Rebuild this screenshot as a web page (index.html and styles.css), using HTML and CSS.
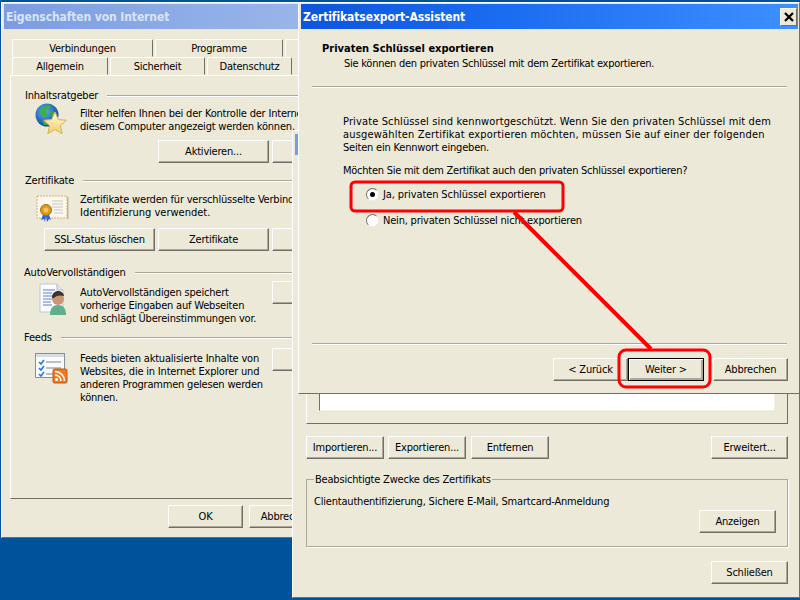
FILE: index.html
```html
<!DOCTYPE html>
<html lang="de">
<head>
<meta charset="utf-8">
<title>Zertifikatsexport-Assistent</title>
<link rel="stylesheet" href="styles.css">
</head>
<body>
<div class="desktop">

  <section class="win props">
    <header class="title title-off">Eigenschaften von Internet</header>
    <div class="tabs tabs-back">
      <span class="tab t-verb">Verbindungen</span><span class="tab t-prog">Programme</span><span class="tab t-rest"></span>
    </div>
    <div class="tabs">
      <span class="tab t-allg">Allgemein</span><span class="tab t-sich">Sicherheit</span><span class="tab t-date">Datenschutz</span>
    </div>
    <div class="panel">
      <div class="legend sec1"><span>Inhaltsratgeber</span><i class="rule"></i></div>
      <div class="row row1">
        <svg class="icon icon-globe" width="34" height="34" viewBox="0 0 34 34">
          <defs>
            <radialGradient id="g1" cx=".4" cy=".35" r=".7"><stop offset="0" stop-color="#5fb2f0"/><stop offset="1" stop-color="#0c3f9c"/></radialGradient>
            <linearGradient id="g2" x1="0" y1="0" x2="0" y2="1"><stop offset="0" stop-color="#fffbe0"/><stop offset="1" stop-color="#f3cd62"/></linearGradient>
          </defs>
          <circle cx="12" cy="12" r="11.5" fill="url(#g1)"/>
          <path d="M4 8c3-4 8-6 12-5-1 3-4 3-5 5 2 2 1 5-1 7-3 0-3-4-6-7z" fill="#3cb04a"/>
          <path d="M15 8c3 0 6 1 7 4l-4 2c-2-1-4-3-3-6zM7 18l4 1 2 3-4 0z" fill="#39a648"/>
          <path d="M20 9l3.400 7.500 8 .8-6 5.400 1.800 8-7.200-4.200-7.200 4.200 1.800-8-6-5.400 8-.8z" fill="url(#g2)" stroke="#d8b25e"/>
        </svg>
        <p class="text">Filter helfen Ihnen bei der Kontrolle der Internetinhalte, die auf<br>diesem Computer angezeigt werden können.</p>
      </div>
      <div class="btns btns1">
        <button class="btn w111">Aktivieren...</button><button class="btn w111 gap3">Filter</button>
      </div>

      <div class="legend sec2"><span>Zertifikate</span><i class="rule"></i></div>
      <div class="row row2">
        <svg class="icon icon-cert" width="34" height="34" viewBox="0 0 34 34">
          <rect x="1" y="1" width="30" height="22" fill="#fdf8ee" stroke="#d9b06c" stroke-dasharray="2 1"/>
          <rect x="31" y="2" width="1.500" height="22" fill="#b8b6a8"/>
          <path d="M16 6h11M16 9h11M16 12h11M18 15h9M18 18h9" stroke="#c4c4c4"/>
          <path d="M8 17l-3 8 3-1 1 3 1-6 1 6 2-3 2 1-3-8z" fill="#2c62d8"/>
          <circle cx="10" cy="15" r="5.500" fill="#d99a1c" stroke="#a86f10"/>
          <circle cx="10" cy="15" r="2.500" fill="#f2c558"/>
        </svg>
        <p class="text">Zertifikate werden für verschlüsselte Verbindungen und zur<br><span class="ls0">Identifizierung verwendet.</span></p>
      </div>
      <div class="btns btns2">
        <button class="btn w111">SSL-Status löschen</button><button class="btn w111 gap3">Zertifikate</button><button class="btn w111 gap3">Herausgeber</button>
      </div>

      <div class="legend sec3"><span>AutoVervollständigen</span><i class="rule"></i></div>
      <div class="row row3">
        <svg class="icon icon-doc" width="34" height="34" viewBox="0 0 34 34">
          <path d="M1 1h17l6 6v22H1z" fill="#fbfcff" stroke="#c2c6cf"/>
          <path d="M18 1v6h6" fill="#dfe3ea" stroke="#b5b9c2"/>
          <path d="M4 7h12M4 10h9M4 13h10M4 16h9M4 19h8M4 22h9" stroke="#5680c8"/>
          <path d="M11 32c0-7 3-10 8-10s8 3 8 10z" fill="#5fae8e"/>
          <circle cx="19" cy="16" r="6" fill="#c99872"/>
          <path d="M13 15c0-5 3-7 6-7s6 2 6 5c-3-1-8-1-10 2z" fill="#3d3430"/>
        </svg>
        <p class="text narrow">AutoVervollständigen speichert<br>vorherige Eingaben auf Webseiten<br>und schlägt Übereinstimmungen vor.</p>
        <button class="btn w111 side3">Einstellungen</button>
      </div>

      <div class="legend sec4"><span>Feeds</span><i class="rule"></i></div>
      <div class="row row4">
        <svg class="icon icon-feed" width="34" height="32" viewBox="0 0 34 32">
          <rect x=".5" y=".5" width="29" height="24" fill="#fafbff" stroke="#8a8f9c"/>
          <rect x="1" y="1" width="28" height="3" fill="#d8dce8"/>
          <path d="M4 9l2 2 3-4M4 15l2 2 3-4M4 21l2 2 3-4" stroke="#2a78d8" stroke-width="1.600" fill="none"/>
          <path d="M11 9h15M11 15h15M11 21h8" stroke="#7d828c"/>
          <rect x="18" y="16" width="14" height="14" rx="1.500" fill="#ee7a1c" stroke="#c25a10"/>
          <circle cx="21.500" cy="26.500" r="1.500" fill="#fff"/>
          <path d="M20 22a6 6 0 0 1 6 6M20 18.500a9.500 9.500 0 0 1 9.500 9.500" stroke="#fff" stroke-width="1.600" fill="none"/>
        </svg>
        <p class="text narrow">Feeds bieten aktualisierte Inhalte von<br>Websites, die in Internet Explorer und<br>anderen Programmen gelesen werden<br>können.</p>
        <button class="btn w111 side4">Einstellungen</button>
      </div>
    </div>
    <div class="foot-props">
      <button class="btn w75">OK</button><button class="btn w75 gap6">Abbrechen</button>
    </div>
  </section>

  <section class="win cert">
    <header class="title title-off title-small"></header>
    <div class="cert-body">
      <div class="cert-group">
        <div class="listbox"></div>
      </div>
      <div class="cert-btns">
        <button class="btn w78">Importieren...</button><button class="btn w78 gap4">Exportieren...</button><button class="btn w78 gap5">Entfernen</button><button class="btn w77 push">Erweitert...</button>
      </div>
      <fieldset class="purpose">
        <legend>Beabsichtigte Zwecke des Zertifikats</legend>
        <p class="purpose-text">Clientauthentifizierung, Sichere E-Mail, Smartcard-Anmeldung</p>
        <div class="purpose-foot"><button class="btn w77">Anzeigen</button></div>
      </fieldset>
      <div class="cert-foot"><button class="btn w77">Schließen</button></div>
    </div>
  </section>

  <section class="win wizard">
    <header class="title title-on">
      <span>Zertifikatsexport-Assistent</span>
      <span class="close"><svg width="10" height="10" viewBox="0 0 10 10"><path d="M1 1l8 8M9 1l-8 8" stroke="#000" stroke-width="2.200"/></svg></span>
    </header>
    <div class="wiz-head">
      <h1>Privaten Schlüssel exportieren</h1>
      <p>Sie können den privaten Schlüssel mit dem Zertifikat exportieren.</p>
    </div>
    <hr class="sep">
    <div class="wiz-body">
      <p><span class="wide-a">Private Schlüssel sind kennwortgeschützt. Wenn Sie den privaten Schlüssel mit dem</span><br><span class="wide-b">ausgewählten Zertifikat exportieren möchten, müssen Sie auf einer der folgenden</span><br>Seiten ein Kennwort eingeben.</p>
      <p class="question">Möchten Sie mit dem Zertifikat auch den privaten Schlüssel exportieren?</p>
      <div class="radio radio-first"><i class="dot on"></i><span>Ja, privaten Schlüssel exportieren</span></div>
      <div class="radio radio-second"><i class="dot"></i><span>Nein, privaten Schlüssel nicht exportieren</span></div>
    </div>
    <hr class="sep">
    <div class="wiz-foot">
      <button class="btn w75">&lt; Zurück</button><button class="btn w76 default">Weiter &gt;</button><button class="btn w75 gap9">Abbrechen</button>
    </div>
  </section>

  <svg class="marks" width="800" height="600" viewBox="0 0 800 600">
    <g fill="none" stroke="#f00" stroke-width="3">
      <rect x="351" y="182" width="212" height="29" rx="4"/>
      <rect x="619" y="350" width="91" height="37" rx="7"/>
      <path d="M514 212L651 349" stroke-width="4"/>
    </g>
  </svg>
</div>
</body>
</html>
```

FILE: styles.css
```css
* { box-sizing: border-box; }
html, body { margin: 0; padding: 0; }
body {
  font-family: "DejaVu Sans Condensed", "DejaVu Sans", sans-serif;
  font-size: 11px;
  line-height: 13px;
  letter-spacing: -.2px;
  color: #000;
}
p, h1 { margin: 0; font-size: inherit; }
.ls0 { letter-spacing: 0; }
.wide-a { letter-spacing: .13px; }
.wide-b { letter-spacing: .18px; }

.desktop {
  position: relative;
  width: 800px;
  height: 600px;
  overflow: hidden;
  background: #00529b;
}

.win {
  position: absolute;
  display: flex;
  flex-direction: column;
  background: #ece9d8;
  border: 1px solid;
  border-color: #fff #716f64 #716f64 #fff;
  overflow: hidden;
}
.props { left: 1px; top: 2px; width: 420px; height: 536px; padding: 1px 2px 0; }
.cert { left: 292px; top: 130px; width: 508px; height: 468px; padding: 3px 2px 0; }
.wizard { left: 298px; top: 2px; width: 502px; height: 392px; padding: 1px 1px 0 2px; }

.title {
  flex: none;
  display: flex;
  align-items: center;
  justify-content: space-between;
  height: 25px;
  padding: 1px 0 0 2px;
  font-weight: bold;
  font-size: 12px;
  letter-spacing: -.1px;
}
.title-off { background: linear-gradient(90deg, #7c9ce0, #a4c0ee); color: #d8e4f7; }
.title-on { background: linear-gradient(90deg, #0a56dc 0%, #1a6cf0 40%, #3d90ff 100%); color: #fff; }
.title-small { height: 21px; }
.close {
  display: flex;
  align-items: center;
  justify-content: center;
  width: 17px;
  height: 18px;
  margin-right: 1px;
  background: #ece9d8;
  border: 1px solid;
  border-color: #fff #716f64 #716f64 #fff;
}

.tabs { display: flex; flex: none; height: 18px; padding-left: 8px; }
.tabs-back { margin-top: 10px; }
.tab {
  flex: none;
  height: 18px;
  margin-right: 2px;
  border: 1px solid;
  border-color: #fff #716f64 transparent #fff;
  border-radius: 2px 2px 0 0;
  text-align: center;
  line-height: 18px;
}
.t-verb { width: 141px; }
.t-prog { width: 128px; }
.t-rest { width: 100px; }
.t-allg { width: 96px; }
.t-sich { width: 95px; }
.t-date { width: 85px; }

.panel {
  flex: none;
  width: 410px;
  height: 424px;
  margin-left: 6px;
  padding: 13px 0 0 14px;
  border: 1px solid;
  border-color: #fff #716f64 #716f64 #fff;
}
.legend { display: flex; align-items: center; height: 13px; }
.rule { flex: 1; height: 2px; margin: 0 0 0 9px; background: #aca899; border-bottom: 1px solid #fff; }
.sec2 { margin-top: 11px; }
.sec3 { margin-top: 15px; margin-left: -1px; }
.sec4 { margin-top: 6px; margin-left: -1px; }

.row { display: flex; align-items: flex-start; padding-left: 10px; }
.row1 { margin-top: 5px; height: 26px; }
.row2 { margin-top: 6px; height: 26px; }
.row3 { margin-top: 7px; height: 39px; }
.row4 { margin-top: 8px; height: 52px; }
.icon { flex: none; margin-right: 11px; }
.icon-globe { margin-top: -4px; }
.icon-cert { margin-top: 2px; margin-left: 1px; margin-right: 10px; }
.icon-doc { margin-top: -3px; margin-left: 4px; margin-right: 7px; }
.icon-feed { margin-top: 1px; }
.text { white-space: nowrap; }
.narrow { width: 192px; }
.side3 { margin-top: -5px; }
.side4 { margin-top: -4px; }

.btns { display: flex; }
.btns1 { margin-top: 7px; padding-left: 133px; }
.btns2 { margin-top: 9px; padding-left: 19px; }

.btn {
  flex: none;
  height: 23px;
  padding: 0;
  font: inherit;
  letter-spacing: inherit;
  color: #000;
  text-align: center;
  background: #ece9d8;
  border: 1px solid;
  border-color: #fff #716f64 #716f64 #fff;
  box-shadow: inset -1px -1px 0 #aca899;
  border-radius: 0;
}
.w111 { width: 111px; }
.w75 { width: 75px; }
.w76 { width: 76px; }
.w77 { width: 77px; }
.w78 { width: 78px; }
.gap3 { margin-left: 3px; }
.gap4 { margin-left: 4px; }
.gap5 { margin-left: 5px; }
.gap6 { margin-left: 6px; }
.gap9 { margin-left: 9px; }
.push { margin-left: auto; }

.foot-props { display: flex; padding: 6px 0 0 164px; }

.wiz-head { flex: none; height: 57px; padding: 13px 0 0 21px; }
.wiz-head h1 { font-weight: bold; letter-spacing: 0; }
.wiz-head p { margin: 2px 0 0 22px; letter-spacing: -.25px; }
.sep {
  flex: none;
  width: 475px;
  height: 2px;
  margin: 0 0 0 11px;
  border: 0;
  background: #aca899;
  border-bottom: 1px solid #fff;
}
.wiz-body { flex: none; height: 255px; padding: 27px 0 0 42px; }
.question { margin-top: 10px; letter-spacing: -.25px; }
.radio { display: flex; align-items: center; height: 13px; padding-left: 23px; }
.radio-first { margin-top: 11px; letter-spacing: -.1px; }
.radio-second { margin-top: 13px; }
.dot {
  position: relative;
  flex: none;
  width: 13px;
  height: 13px;
  margin-right: 4px;
  border-radius: 50%;
  background: #fff;
  border: 1px solid;
  border-color: #716f64 #f1efe2 #f1efe2 #716f64;
}
.dot.on::after {
  content: "";
  position: absolute;
  left: 3px;
  top: 3px;
  width: 5px;
  height: 5px;
  border-radius: 50%;
  background: #000;
}
.wiz-foot { display: flex; padding: 13px 0 0 252px; }
.default { border: 1px solid #000; box-shadow: inset 1px 1px 0 #fff, inset -2px -2px 0 #aca899; }

.cert-body { flex: 1; display: flex; flex-direction: column; padding: 0 9px 0 11px; }
.cert-group {
  flex: none;
  height: 269px;
  display: flex;
  flex-direction: column;
  justify-content: flex-end;
  padding: 0 12px 12px 12px;
  border: 1px solid;
  border-color: transparent #716f64 #716f64 #fff;
}
.listbox { height: 220px; background: #fff; border: 1px solid; border-color: #716f64 #f1efe2 #f1efe2 #716f64; }
.cert-btns { display: flex; margin-top: 12px; }
.purpose {
  flex: none;
  height: 74px;
  margin: 14px 0 0;
  padding: 9px 11px 0 7px;
  border: 1px solid #aca899;
  box-shadow: 1px 1px 0 #fff;
  min-width: 0;
}
.purpose legend { padding: 0 1px; line-height: 13px; }
.purpose-foot { display: flex; justify-content: flex-end; margin-top: 2px; }
.cert-foot { display: flex; justify-content: flex-end; margin-top: 14px; }

.marks { position: absolute; left: 0; top: 0; pointer-events: none; }
```
